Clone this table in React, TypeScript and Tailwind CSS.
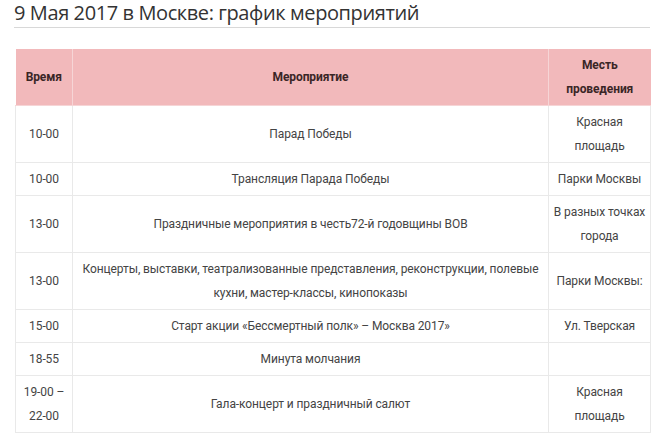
import React from "react";

const rows: { t: React.ReactNode; e: React.ReactNode; p: React.ReactNode }[] = [
  { t: "10-00", e: "Парад Победы", p: <>Красная<br />площадь</> },
  { t: "10-00", e: "Трансляция Парада Победы", p: "Парки Москвы" },
  { t: "13-00", e: "Праздничные мероприятия в честь72-й годовщины ВОВ", p: <>В разных точках<br />города</> },
  {
    t: "13-00",
    e: <>Концерты, выставки, театрализованные представления, реконструкции, полевые<br />кухни, мастер-классы, кинопоказы</>,
    p: "Парки Москвы:",
  },
  { t: "15-00", e: "Старт акции «Бессмертный полк» – Москва 2017»", p: "Ул. Тверская" },
  { t: "18-55", e: "Минута молчания", p: "" },
  { t: <>19-00 –<br />22-00</>, e: "Гала-концерт и праздничный салют", p: <>Красная<br />площадь</> },
];

export default function App() {
  return (
    <div className="w-[659px] h-[447px] bg-white overflow-hidden">
      <div className="pl-[14px] pr-[9px]">
        <h1
          className="text-[20px] leading-[26px] tracking-[-0.4px] text-[#333] font-normal pb-[1px] border-b border-[#d8d8d8]"
          style={{ fontFamily: '"Open Sans", "Noto Sans", sans-serif' }}
        >
          9 Мая 2017 в Москве: график мероприятий
        </h1>
      </div>
      <div className="pl-[15px] pt-[21px]">
        <table
          className="border-collapse text-[12px] leading-[24px] tracking-[-0.1px] text-[#444] text-center w-[635px] table-fixed whitespace-nowrap"
          style={{ fontFamily: 'Roboto, "Noto Sans", sans-serif' }}
        >
          <colgroup>
            <col className="w-[57px]" />
            <col className="w-[476px]" />
            <col className="w-[102px]" />
          </colgroup>
          <thead>
            <tr className="bg-[#f2b9bb] h-[56px]">
              <th className="border border-[#f6d5d6] border-l-0 border-t-0 font-bold text-[#3a2626] px-1">Время</th>
              <th className="border border-[#f6d5d6] border-t-0 font-bold text-[#3a2626] px-1">Мероприятие</th>
              <th className="border border-[#f6d5d6] border-t-0 border-r-0 font-bold text-[#3a2626] px-1">Месть<br />проведения</th>
            </tr>
          </thead>
          <tbody>
            {rows.map((r, i) => (
              <tr key={i}>
                <td className="border border-[#e9e9e9] px-1 py-[4px]">{r.t}</td>
                <td className="border border-[#e9e9e9] px-1 py-[4px]">{r.e}</td>
                <td className="border border-[#e9e9e9] px-1 py-[4px]">{r.p}</td>
              </tr>
            ))}
          </tbody>
        </table>
      </div>
    </div>
  );
}
